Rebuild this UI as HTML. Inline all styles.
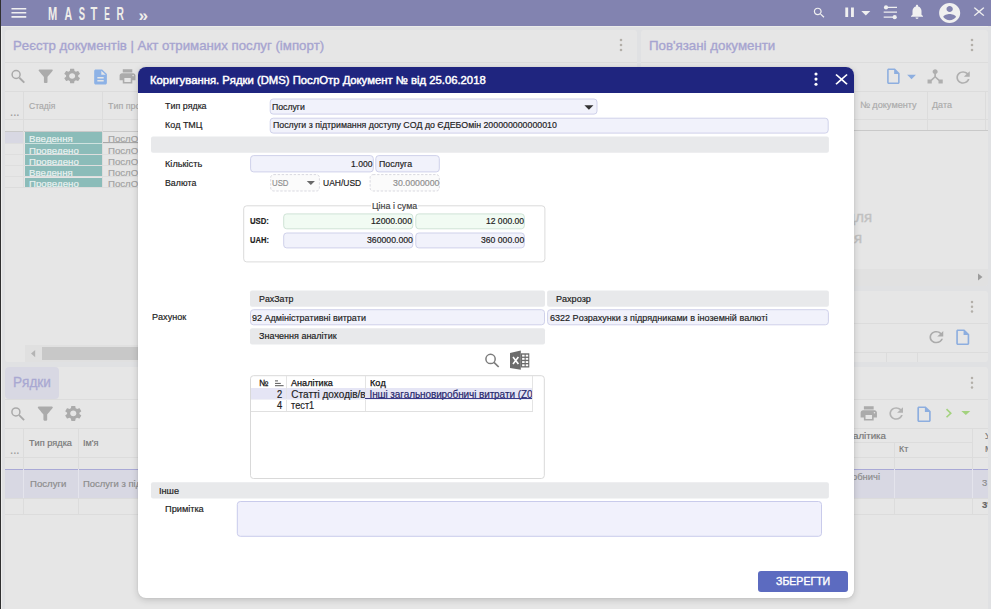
<!DOCTYPE html>
<html lang="uk">
<head>
<meta charset="utf-8">
<title>MASTER</title>
<style>
*{box-sizing:border-box;margin:0;padding:0}
html,body{width:991px;height:609px;overflow:hidden}
body{background:#e0e1e3;font-family:"Liberation Sans",sans-serif;font-size:10px;color:#222;position:relative;font-kerning:none}
.a{position:absolute}
.t{position:absolute;white-space:nowrap;line-height:1;-webkit-text-stroke:.18px currentColor}
svg{position:absolute;display:block;overflow:visible}
#top{left:0;top:0;width:991px;height:26px;background:#8283b0}
#edge{left:0;top:0;width:1px;height:609px;background:#303030}
.panel{position:absolute;background:#e6e6e6;border-radius:3px}
.ln{position:absolute;background:#dcdcdc}
.clip{position:absolute;overflow:hidden}
/* modal */
#modal{left:138px;top:67px;width:715.5px;height:531px;background:#fff;border-radius:8px;box-shadow:0 2px 7px rgba(0,0,0,.17),0 0 2px rgba(0,0,0,.08)}
#mhead{left:138px;top:67px;width:715.5px;height:25.5px;background:#1f257f;border-radius:8px 8px 0 0}
.inp{position:absolute;border:1px solid #cfd1ea;border-radius:3px;background:#f1f1fb;overflow:hidden}
.inp.g{background:#f0fbf1;border-color:#cfe3d6}
.inp.d{border:1px dashed #d4d4d4;background:#fbfbfb}
.bar{position:absolute;background:#e9e9e9;border-radius:2px}
</style>
</head>
<body>
<!-- ===== background app ===== -->
<div class="a" id="top"></div>
<div class="a" style="left:1px;top:26px;width:990px;height:1px;background:#eaebea"></div>
<div class="a" style="left:1px;top:26px;width:1px;height:583px;background:#eeeeee"></div>
<svg style="left:8.53px;top:3.20px" width="19.73" height="19.60" viewBox="0 0 24 24" preserveAspectRatio="none"><path fill="#f0f0f0" d="M3 18h18v-2H3v2zm0-5h18v-2H3v2zm0-7v2h18V6H3z"/></svg>
<svg style="left:0;top:0" width="160" height="26" viewBox="0 0 160 26">
 <g fill="#efeeea" font-family="Liberation Sans, sans-serif" font-weight="bold" font-size="18">
  <text x="48.1" y="19.7" textLength="9.2" lengthAdjust="spacingAndGlyphs">M</text>
  <text x="64.6" y="19.7" textLength="7.6" lengthAdjust="spacingAndGlyphs">A</text>
  <text x="78.8" y="19.7" textLength="6.3" lengthAdjust="spacingAndGlyphs">S</text>
  <text x="90.4" y="19.7" textLength="6.8" lengthAdjust="spacingAndGlyphs">T</text>
  <text x="104.3" y="19.7" textLength="5.6" lengthAdjust="spacingAndGlyphs">E</text>
  <text x="116.6" y="19.7" textLength="7.4" lengthAdjust="spacingAndGlyphs">R</text>
  <text x="138.6" y="20.6" font-size="17" textLength="9.6" lengthAdjust="spacingAndGlyphs">»</text>
 </g>
</svg>
<svg style="left:811.58px;top:6.28px" width="14.55" height="13.72" viewBox="0 0 24 24" preserveAspectRatio="none"><path fill="#f0f0f0" d="M15.5 14h-.79l-.28-.27C15.41 12.59 16 11.11 16 9.5 16 5.91 13.09 3 9.5 3S3 5.91 3 9.5 5.91 16 9.5 16c1.61 0 3.09-.59 4.23-1.57l.27.28v.79l5 4.99L20.49 19l-4.99-5zm-6 0C7.01 14 5 11.99 5 9.5S7.01 5 9.5 5 14 7.01 14 9.5 11.99 14 9.5 14z"/></svg>
<svg style="left:840.60px;top:4.11px" width="17.20" height="16.29" viewBox="0 0 24 24" preserveAspectRatio="none"><path fill="#f0f0f0" d="M6 19h4V5H6v14zm8-14v14h4V5h-4z"/></svg>
<svg style="left:854.70px;top:1.60px" width="21.60" height="21.60" viewBox="0 0 24 24" preserveAspectRatio="none"><path fill="#f0f0f0" d="M7 10l5 5 5-5z"/></svg>
<svg style="left:883px;top:4px" width="16" height="16" viewBox="0 0 16 16"><g stroke="#f0f0f0" stroke-width="1.3" fill="none"><path d="M3 3.4H14M.7 8.2H14M.7 13.2H11.6"/></g><g fill="#f0f0f0"><circle cx="3" cy="3.4" r="2.1"/><circle cx="11.7" cy="13.2" r="2.1"/></g></svg>
<svg style="left:908.00px;top:3.18px" width="18.00" height="17.48" viewBox="0 0 24 24" preserveAspectRatio="none"><path fill="#f0f0f0" d="M12 22c1.1 0 2-.9 2-2h-4c0 1.1.89 2 2 2zm6-6v-5c0-3.07-1.64-5.64-4.5-6.32V4c0-.83-.67-1.5-1.5-1.5s-1.5.67-1.5 1.5v.68C7.63 5.36 6 7.92 6 11v5l-2 2v1h16v-1l-2-2z"/></svg>
<svg style="left:937.09px;top:0.80px" width="25.32" height="24.00" viewBox="0 0 24 24" preserveAspectRatio="none"><path fill="#f0f0f0" d="M12 2C6.48 2 2 6.48 2 12s4.48 10 10 10 10-4.48 10-10S17.52 2 12 2zm0 3c1.66 0 3 1.34 3 3s-1.34 3-3 3-3-1.34-3-3 1.34-3 3-3zm0 14.2c-2.5 0-4.71-1.28-6-3.22.03-1.99 4-3.08 6-3.08 1.99 0 5.97 1.09 6 3.08-1.29 1.94-3.5 3.22-6 3.22z"/></svg>
<svg style="left:970.41px;top:4.22px" width="18.17" height="15.26" viewBox="0 0 24 24" preserveAspectRatio="none"><path fill="#f0f0f0" d="M19 6.41L17.59 5 12 10.59 6.41 5 5 6.41 10.59 12 5 17.59 6.41 19 12 13.41 17.59 19 19 17.59 13.41 12z"/></svg>
<!-- panels -->
<div class="panel" style="left:5px;top:30px;width:632px;height:332px"></div>
<div class="panel" style="left:641px;top:30px;width:347px;height:256.2px"></div>
<div class="panel" style="left:641px;top:290.5px;width:347px;height:71.5px"></div>
<div class="panel" style="left:5px;top:367px;width:982.5px;height:250px"></div>
<!-- left top panel -->
<span class="t" style="top:39.00px;font-size:13px;color:#a6a4d0;left:12.50px;transform:scaleX(1.0171);transform-origin:0 0;-webkit-text-stroke:.35px #a6a4d0;">Реєстр документів | Акт отриманих послуг (імпорт)</span>
<svg style="left:617.9px;top:37.4px" width="6" height="16" viewBox="0 0 6 16"><g fill="#b3afa9"><circle cx="3" cy="3" r="1.3"/><circle cx="3" cy="8" r="1.3"/><circle cx="3" cy="13" r="1.3"/></g></svg>
<div class="ln" style="left:5px;top:62px;width:632px;height:1px"></div>
<svg style="left:10px;top:68px" width="20" height="20" viewBox="10 68 20 20"><circle cx="16.1" cy="74.5" r="4.0" fill="none" stroke="#a9a9a9" stroke-width="1.5"/><path d="M19.32 77.72L24.3 82.7" stroke="#a9a9a9" stroke-width="1.9" fill="none"/></svg>
<svg style="left:34.59px;top:66.20px" width="21.42" height="20.40" viewBox="0 0 24 24" preserveAspectRatio="none"><path fill="#ababab" d="M4.25 5.61C6.27 8.2 10 13 10 13v6c0 .55.45 1 1 1h2c.55 0 1-.45 1-1v-6s3.72-4.8 5.74-7.39A.998.998 0 0 0 18.95 4H5.04c-.83 0-1.3.95-.79 1.61z"/></svg>
<svg style="left:62.15px;top:67.20px" width="20.30" height="18.00" viewBox="0 0 24 24" preserveAspectRatio="none"><path fill="#ababab" d="M19.14 12.94c.04-.3.06-.61.06-.94 0-.32-.02-.64-.07-.94l2.03-1.58c.18-.14.23-.41.12-.61l-1.92-3.32c-.12-.22-.37-.29-.59-.22l-2.39.96c-.5-.38-1.03-.7-1.62-.94l-.36-2.54c-.04-.24-.24-.41-.48-.41h-3.84c-.24 0-.43.17-.47.41l-.36 2.54c-.59.24-1.13.57-1.62.94l-2.39-.96c-.22-.08-.47 0-.59.22L2.74 8.87c-.12.21-.08.47.12.61l2.03 1.58c-.05.3-.09.63-.09.94s.02.64.07.94l-2.03 1.58c-.18.14-.23.41-.12.61l1.92 3.32c.12.22.37.29.59.22l2.39-.96c.5.38 1.03.7 1.62.94l.36 2.54c.05.24.24.41.48.41h3.84c.24 0 .44-.17.47-.41l.36-2.54c.59-.24 1.13-.56 1.62-.94l2.39.96c.22.08.47 0 .59-.22l1.92-3.32c.12-.22.07-.47-.12-.61l-2.01-1.58zM12 15.6c-1.98 0-3.6-1.62-3.6-3.6s1.62-3.6 3.6-3.6 3.6 1.62 3.6 3.6-1.62 3.6-3.6 3.6z"/></svg>
<svg style="left:91.12px;top:67.50px" width="19.05" height="18.00" viewBox="0 0 24 24" preserveAspectRatio="none"><path fill="#8db2e6" d="M14 2H6c-1.1 0-1.99.9-1.99 2L4 20c0 1.1.89 2 1.99 2H18c1.1 0 2-.9 2-2V8l-6-6zm2 16H8v-2h8v2zm0-4H8v-2h8v2zm-3-5V3.5L18.5 9H13z"/></svg>
<svg style="left:118.01px;top:67.15px" width="19.08" height="18.80" viewBox="0 0 24 24" preserveAspectRatio="none"><path fill="#ababab" d="M19 8H5c-1.66 0-3 1.34-3 3v6h4v4h12v-4h4v-6c0-1.66-1.34-3-3-3zm-3 11H8v-5h8v5zm3-7c-.55 0-1-.45-1-1s.45-1 1-1 1 .45 1 1-.45 1-1 1zm-1-9H6v4h12V3z"/></svg>
<!-- left table -->
<div class="ln" style="left:5px;top:91px;width:632px;height:1px"></div>
<div class="ln" style="left:5px;top:119px;width:632px;height:1px"></div>
<div class="ln" style="left:5px;top:131px;width:632px;height:1px;background:#c9c9c9"></div>
<div class="ln" style="left:23px;top:92px;width:1px;height:96px"></div>
<div class="ln" style="left:102px;top:92px;width:1px;height:96px"></div>
<span class="t" style="top:102.00px;font-size:9px;color:#a9a9a9;left:29.30px;transform:scaleX(0.9512);transform-origin:0 0;">Стадія</span>
<span class="t" style="top:102.00px;font-size:9px;color:#a9a9a9;left:108.00px;transform:scaleX(0.9880);transform-origin:0 0;">Тип про</span>
<span class="t" style="top:105.00px;font-size:13px;color:#9a9a9a;left:10.40px;transform:scaleX(0.8675);transform-origin:0 0;">...</span>
<div class="a" style="left:5px;top:132px;width:18px;height:11.5px;background:#d8d8e3"></div>
<div class="a" style="left:25px;top:132px;width:77px;height:11px;background:#8bbcb9"></div>
<div class="clip" style="left:25px;top:131px;width:115px;height:12px"><span class="t" style="left:3.8px;top:4px;font-size:9px;color:#eaf2f1;transform:scaleX(1.07);transform-origin:0 0">Введення</span><span class="t" style="left:82.8px;top:4px;font-size:9px;color:#a2a2a2;transform:scaleX(1.07);transform-origin:0 0">ПослОтр</span></div>
<div class="ln" style="left:5px;top:142.9px;width:632px;height:1px;background:#dedede"></div>
<div class="a" style="left:25px;top:144.1px;width:77px;height:9.7px;background:#8bbcb9"></div>
<div class="clip" style="left:25px;top:144px;width:115px;height:10px"><span class="t" style="left:3.8px;top:3px;font-size:9px;color:#eaf2f1;transform:scaleX(1.07);transform-origin:0 0">Проведено</span><span class="t" style="left:82.8px;top:3px;font-size:9px;color:#a2a2a2;transform:scaleX(1.07);transform-origin:0 0">ПослОтр</span></div>
<div class="ln" style="left:5px;top:154.1px;width:632px;height:1px;background:#dedede"></div>
<div class="a" style="left:25px;top:155.4px;width:77px;height:9.7px;background:#8bbcb9"></div>
<div class="clip" style="left:25px;top:155px;width:115px;height:10px"><span class="t" style="left:3.8px;top:3px;font-size:9px;color:#eaf2f1;transform:scaleX(1.07);transform-origin:0 0">Проведено</span><span class="t" style="left:82.8px;top:3px;font-size:9px;color:#a2a2a2;transform:scaleX(1.07);transform-origin:0 0">ПослОтр</span></div>
<div class="ln" style="left:5px;top:165.1px;width:632px;height:1px;background:#dedede"></div>
<div class="a" style="left:25px;top:166.2px;width:77px;height:9.9px;background:#8bbcb9"></div>
<div class="clip" style="left:25px;top:166px;width:115px;height:10px"><span class="t" style="left:3.8px;top:3px;font-size:9px;color:#eaf2f1;transform:scaleX(1.07);transform-origin:0 0">Введення</span><span class="t" style="left:82.8px;top:3px;font-size:9px;color:#a2a2a2;transform:scaleX(1.07);transform-origin:0 0">ПослОтр</span></div>
<div class="ln" style="left:5px;top:176.3px;width:632px;height:1px;background:#dedede"></div>
<div class="a" style="left:25px;top:177.5px;width:77px;height:9.5px;background:#8bbcb9"></div>
<div class="clip" style="left:25px;top:177px;width:115px;height:10px"><span class="t" style="left:3.8px;top:3px;font-size:9px;color:#eaf2f1;transform:scaleX(1.07);transform-origin:0 0">Проведено</span><span class="t" style="left:82.8px;top:3px;font-size:9px;color:#a2a2a2;transform:scaleX(1.07);transform-origin:0 0">ПослОтр</span></div>
<div class="a" style="left:25px;top:142.9px;width:77px;height:.8px;background:#cfe2df"></div>
<div class="a" style="left:103px;top:142px;width:40px;height:1px;background:#a8a8a8"></div>
<div class="ln" style="left:5px;top:187px;width:632px;height:1px"></div>
<!-- scrollbar -->
<div class="a" style="left:25px;top:345px;width:612px;height:17px;background:#e0e0e0"></div>
<div class="a" style="left:42px;top:347px;width:400px;height:12.7px;background:#c8c8c8"></div>
<svg style="left:30.9px;top:349.9px" width="4.2" height="7.2" viewBox="0 0 5 8" preserveAspectRatio="none"><path d="M5 0L0 4l5 4z" fill="#b4b4b4"/></svg>
<!-- right top panel -->
<span class="t" style="top:39.00px;font-size:13px;color:#a6a4d0;left:649.30px;transform:scaleX(1.0232);transform-origin:0 0;-webkit-text-stroke:.35px #a6a4d0;">Пов'язані документи</span>
<svg style="left:968.9px;top:37.4px" width="6" height="16" viewBox="0 0 6 16"><g fill="#b3afa9"><circle cx="3" cy="3" r="1.3"/><circle cx="3" cy="8" r="1.3"/><circle cx="3" cy="13" r="1.3"/></g></svg>
<div class="ln" style="left:641px;top:62px;width:346.5px;height:1px"></div>
<svg style="left:884.17px;top:67.16px" width="18.75" height="18.48" viewBox="0 0 24 24" preserveAspectRatio="none"><path fill="#8daedf" d="M14 2H6c-1.1 0-1.99.9-1.99 2L4 20c0 1.1.89 2 1.99 2H18c1.1 0 2-.9 2-2V8l-6-6zM6 20V4h7v5h5v11H6z"/></svg>
<svg style="left:900.84px;top:65.60px" width="21.12" height="21.12" viewBox="0 0 24 24" preserveAspectRatio="none"><path fill="#8daedf" d="M7 10l5 5 5-5z"/></svg>
<svg style="left:925.47px;top:67.35px" width="20.27" height="18.80" viewBox="0 0 24 24" preserveAspectRatio="none"><path fill="#afafaf" d="M17 16l-4-4V8.82C14.16 8.4 15 7.3 15 6c0-1.66-1.34-3-3-3S9 4.34 9 6c0 1.3.84 2.4 2 2.82V12l-4 4H3v5h5v-3.05l4-4.2 4 4.2V21h5v-5h-4z"/></svg>
<svg style="left:952.64px;top:67.55px" width="20.11" height="18.90" viewBox="0 0 24 24" preserveAspectRatio="none"><path fill="#afafaf" d="M17.65 6.35C16.2 4.9 14.21 4 12 4c-4.42 0-7.99 3.58-7.99 8s3.57 8 7.99 8c3.73 0 6.84-2.55 7.73-6h-2.08c-.82 2.33-3.04 4-5.65 4-3.31 0-6-2.69-6-6s2.69-6 6-6c1.66 0 3.14.69 4.22 1.78L13 11h7V4l-2.35 2.35z"/></svg>
<div class="ln" style="left:641px;top:91px;width:346.5px;height:1px"></div>
<div class="ln" style="left:641px;top:119px;width:346.5px;height:1px"></div>
<div class="ln" style="left:641px;top:130px;width:346.5px;height:1px;background:#c9c9c9"></div>
<div class="ln" style="left:926.5px;top:92px;width:1px;height:38px"></div>
<div class="ln" style="left:985px;top:92px;width:1px;height:38px"></div>
<span class="t" style="top:101.00px;font-size:9px;color:#ababab;left:860.30px;transform:scaleX(1.0173);transform-origin:0 0;">№ документу</span>
<span class="t" style="top:101.00px;font-size:9px;color:#ababab;left:931.60px;transform:scaleX(0.9935);transform-origin:0 0;">Дата</span>
<span class="t" style="right:118.80px;top:209.00px;font-size:15px;color:#c1c1c1;transform:scaleX(1);transform-origin:100% 0;-webkit-text-stroke:.35px #c1c1c1;">для</span>
<span class="t" style="right:128.80px;top:230.00px;font-size:15px;color:#c1c1c1;transform:scaleX(1);transform-origin:100% 0;-webkit-text-stroke:.35px #c1c1c1;">я</span>
<div class="a" style="left:641px;top:269px;width:347px;height:17.2px;background:#e1e1e1;border-radius:0 0 3px 3px"></div>
<svg style="left:977.5px;top:273px" width="4.5" height="8" viewBox="0 0 5 8"><path d="M0 0l5 4-5 4z" fill="#9c9c9c"/></svg>
<!-- right mid panel -->
<svg style="left:969px;top:298.8px" width="6" height="15.6" viewBox="0 0 6 15.6"><g fill="#b3afa9"><circle cx="3" cy="3" r="1.25"/><circle cx="3" cy="7.8" r="1.25"/><circle cx="3" cy="12.6" r="1.25"/></g></svg>
<div class="ln" style="left:641px;top:322.5px;width:346.5px;height:1px"></div>
<svg style="left:925.54px;top:328.43px" width="20.71" height="18.45" viewBox="0 0 24 24" preserveAspectRatio="none"><path fill="#ababab" d="M17.65 6.35C16.2 4.9 14.21 4 12 4c-4.42 0-7.99 3.58-7.99 8s3.57 8 7.99 8c3.73 0 6.84-2.55 7.73-6h-2.08c-.82 2.33-3.04 4-5.65 4-3.31 0-6-2.69-6-6s2.69-6 6-6c1.66 0 3.14.69 4.22 1.78L13 11h7V4l-2.35 2.35z"/></svg>
<svg style="left:952.75px;top:328.26px" width="19.50" height="18.48" viewBox="0 0 24 24" preserveAspectRatio="none"><path fill="#8daedf" d="M14 2H6c-1.1 0-1.99.9-1.99 2L4 20c0 1.1.89 2 1.99 2H18c1.1 0 2-.9 2-2V8l-6-6zM6 20V4h7v5h5v11H6z"/></svg>
<div class="ln" style="left:641px;top:351.5px;width:346.5px;height:1px"></div>
<div class="ln" style="left:885.5px;top:352px;width:1px;height:10px"></div>
<div class="ln" style="left:917px;top:352px;width:1px;height:10px"></div>
<!-- bottom panel -->
<div class="a" style="left:5px;top:367px;width:53.7px;height:31.5px;background:#d8d8e3;border-radius:4px"></div>
<span class="t" style="top:375.00px;font-size:14px;color:#a9a8d2;left:13.40px;transform:scaleX(0.9697);transform-origin:0 0;-webkit-text-stroke:.3px #a9a8d2;">Рядки</span>
<svg style="left:969px;top:374.8px" width="6" height="15.6" viewBox="0 0 6 15.6"><g fill="#b3afa9"><circle cx="3" cy="3" r="1.25"/><circle cx="3" cy="7.8" r="1.25"/><circle cx="3" cy="12.6" r="1.25"/></g></svg>
<div class="ln" style="left:5px;top:399px;width:982.5px;height:1px"></div>
<svg style="left:9px;top:405px" width="20" height="20" viewBox="9 405 20 20"><circle cx="15.9" cy="411.9" r="4.0" fill="none" stroke="#a9a9a9" stroke-width="1.5"/><path d="M19.12 415.12L24.1 420.1" stroke="#a9a9a9" stroke-width="1.9" fill="none"/></svg>
<svg style="left:34.19px;top:402.65px" width="22.63" height="21.30" viewBox="0 0 24 24" preserveAspectRatio="none"><path fill="#ababab" d="M4.25 5.61C6.27 8.2 10 13 10 13v6c0 .55.45 1 1 1h2c.55 0 1-.45 1-1v-6s3.72-4.8 5.74-7.39A.998.998 0 0 0 18.95 4H5.04c-.83 0-1.3.95-.79 1.61z"/></svg>
<svg style="left:62.72px;top:404.12px" width="20.56" height="18.75" viewBox="0 0 24 24" preserveAspectRatio="none"><path fill="#ababab" d="M19.14 12.94c.04-.3.06-.61.06-.94 0-.32-.02-.64-.07-.94l2.03-1.58c.18-.14.23-.41.12-.61l-1.92-3.32c-.12-.22-.37-.29-.59-.22l-2.39.96c-.5-.38-1.03-.7-1.62-.94l-.36-2.54c-.04-.24-.24-.41-.48-.41h-3.84c-.24 0-.43.17-.47.41l-.36 2.54c-.59.24-1.13.57-1.62.94l-2.39-.96c-.22-.08-.47 0-.59.22L2.74 8.87c-.12.21-.08.47.12.61l2.03 1.58c-.05.3-.09.63-.09.94s.02.64.07.94l-2.03 1.58c-.18.14-.23.41-.12.61l1.92 3.32c.12.22.37.29.59.22l2.39-.96c.5.38 1.03.7 1.62.94l.36 2.54c.05.24.24.41.48.41h3.84c.24 0 .44-.17.47-.41l.36-2.54c.59-.24 1.13-.56 1.62-.94l2.39.96c.22.08.47 0 .59-.22l1.92-3.32c.12-.22.07-.47-.12-.61l-2.01-1.58zM12 15.6c-1.98 0-3.6-1.62-3.6-3.6s1.62-3.6 3.6-3.6 3.6 1.62 3.6 3.6-1.62 3.6-3.6 3.6z"/></svg>
<svg style="left:858.87px;top:403.83px" width="19.56" height="18.93" viewBox="0 0 24 24" preserveAspectRatio="none"><path fill="#ababab" d="M19 8H5c-1.66 0-3 1.34-3 3v6h4v4h12v-4h4v-6c0-1.66-1.34-3-3-3zm-3 11H8v-5h8v5zm3-7c-.55 0-1-.45-1-1s.45-1 1-1 1 .45 1 1-.45 1-1 1zm-1-9H6v4h12V3z"/></svg>
<svg style="left:885.59px;top:404.32px" width="20.41" height="19.05" viewBox="0 0 24 24" preserveAspectRatio="none"><path fill="#b3b3b3" d="M17.65 6.35C16.2 4.9 14.21 4 12 4c-4.42 0-7.99 3.58-7.99 8s3.57 8 7.99 8c3.73 0 6.84-2.55 7.73-6h-2.08c-.82 2.33-3.04 4-5.65 4-3.31 0-6-2.69-6-6s2.69-6 6-6c1.66 0 3.14.69 4.22 1.78L13 11h7V4l-2.35 2.35z"/></svg>
<svg style="left:913.65px;top:404.66px" width="20.10" height="18.48" viewBox="0 0 24 24" preserveAspectRatio="none"><path fill="#8daedf" d="M14 2H6c-1.1 0-1.99.9-1.99 2L4 20c0 1.1.89 2 1.99 2H18c1.1 0 2-.9 2-2V8l-6-6zM6 20V4h7v5h5v11H6z"/></svg>
<svg style="left:938.74px;top:404.40px" width="19.43" height="18.40" viewBox="0 0 24 24" preserveAspectRatio="none"><path fill="#a3d27e" d="M10 6L8.59 7.41 13.17 12l-4.58 4.59L10 18l6-6z"/></svg>
<svg style="left:954.70px;top:403.40px" width="21.60" height="19.20" viewBox="0 0 24 24" preserveAspectRatio="none"><path fill="#a3d27e" d="M7 10l5 5 5-5z"/></svg>
<div class="a" style="left:5px;top:469.4px;width:982.5px;height:28.8px;background:#d8d8e3"></div>
<div class="ln" style="left:5px;top:428px;width:982.5px;height:1px"></div>
<div class="ln" style="left:5px;top:457px;width:982.5px;height:1px"></div>
<div class="ln" style="left:5px;top:468.6px;width:982.5px;height:1px;background:#a9a9d6"></div>
<div class="ln" style="left:5px;top:498px;width:982.5px;height:1px"></div>
<div class="ln" style="left:5px;top:513.5px;width:982.5px;height:1px"></div>
<div class="ln" style="left:23px;top:429px;width:1px;height:85px"></div>
<div class="ln" style="left:78px;top:429px;width:1px;height:85px"></div>
<div class="ln" style="left:894.4px;top:442.5px;width:1px;height:71px"></div>
<div class="ln" style="left:972.3px;top:429px;width:1px;height:85px"></div>
<div class="ln" style="left:840px;top:442.3px;width:132px;height:1px"></div>
<div class="a" style="left:23px;top:469.4px;width:1px;height:28.6px;background:#e4e4ec"></div>
<div class="a" style="left:78px;top:469.4px;width:1px;height:28.6px;background:#e4e4ec"></div>
<div class="a" style="left:894.4px;top:469.4px;width:1px;height:28.6px;background:#e4e4ec"></div>
<div class="a" style="left:972.3px;top:469.4px;width:1px;height:28.6px;background:#e4e4ec"></div>
<span class="t" style="top:439.00px;font-size:9px;color:#777;left:29.30px;transform:scaleX(1.0198);transform-origin:0 0;">Тип рядка</span>
<span class="t" style="top:439.00px;font-size:9px;color:#777;left:83.00px;transform:scaleX(1.0144);transform-origin:0 0;">Ім'я</span>
<span class="t" style="top:443.00px;font-size:13px;color:#9a9a9a;left:10.00px;transform:scaleX(0.8768);transform-origin:0 0;">...</span>
<span class="t" style="top:480.00px;font-size:9px;color:#8c8c8c;left:29.50px;transform:scaleX(1.0665);transform-origin:0 0;">Послуги</span>
<span class="t" style="top:480.00px;font-size:9px;color:#8c8c8c;left:83.30px;transform:scaleX(1.0527);transform-origin:0 0;">Послуги з під</span>
<span class="t" style="top:432.00px;font-size:9px;color:#777;left:853.00px;transform:scaleX(1.0803);transform-origin:0 0;">алітика</span>
<span class="t" style="top:445.00px;font-size:9px;color:#777;left:898.80px;transform:scaleX(0.9824);transform-origin:0 0;">Кт</span>
<span class="t" style="top:432.00px;font-size:9px;color:#777;left:985.00px;">У</span>
<span class="t" style="top:445.00px;font-size:9px;color:#777;left:985.00px;">М</span>
<span class="t" style="top:473.00px;font-size:9px;color:#8c8c8c;left:852.00px;transform:scaleX(1.0430);transform-origin:0 0;">обничі</span>
<span class="t" style="top:478.00px;font-size:9.5px;color:#8c8c8c;left:982.00px;">3</span>
<span class="t" style="top:500.00px;font-size:9.5px;color:#666;font-weight:bold;left:982.00px;">3'</span>
<div class="a" style="left:987.5px;top:26px;width:4px;height:583px;background:#e0e1e3"></div>
<!-- ===== modal ===== -->
<div class="a" id="modal"></div>
<div class="a" id="mhead"></div>
<svg style="left:0;top:0" width="991" height="609" viewBox="0 0 991 609"><rect x="270.20" y="99.00" width="326.80" height="15.10" rx="3" fill="#f1f2fb" stroke="#cfd1ea" stroke-width="1"/><rect x="270.20" y="118.20" width="558.00" height="14.90" rx="3" fill="#f1f2fb" stroke="#cfd1ea" stroke-width="1"/><rect x="151.00" y="136.50" width="677.90" height="16.30" rx="2" fill="#e8e9eb"/><rect x="250.60" y="155.60" width="122.70" height="16.30" rx="3" fill="#f1f2fb" stroke="#cfd1ea" stroke-width="1"/><rect x="375.80" y="155.60" width="63.50" height="16.30" rx="3" fill="#f1f2fb" stroke="#cfd1ea" stroke-width="1"/><rect x="270.70" y="174.60" width="48.70" height="16.40" rx="3" fill="#fbfbfb" stroke="#d9d9e0" stroke-width="1" stroke-dasharray="2.4 1.6"/><rect x="370.10" y="174.60" width="69.20" height="16.40" rx="3" fill="#fbfbfb" stroke="#d9d9e0" stroke-width="1" stroke-dasharray="2.4 1.6"/><rect x="243.70" y="205.80" width="301.20" height="56.10" rx="3" fill="#fff" stroke="#dbdbdb" stroke-width="1"/><rect x="283.70" y="213.90" width="129.10" height="14.90" rx="3" fill="#f1fbf3" stroke="#cfe3d6" stroke-width="1"/><rect x="415.80" y="213.90" width="108.50" height="14.90" rx="3" fill="#f1fbf3" stroke="#cfe3d6" stroke-width="1"/><rect x="283.70" y="233.00" width="129.10" height="14.90" rx="3" fill="#f1f2fb" stroke="#cfd1ea" stroke-width="1"/><rect x="415.80" y="233.00" width="108.50" height="14.90" rx="3" fill="#f1f2fb" stroke="#cfd1ea" stroke-width="1"/><rect x="250.00" y="290.50" width="295.00" height="16.30" rx="2" fill="#e8e9eb"/><rect x="547.10" y="290.50" width="281.80" height="16.30" rx="2" fill="#e8e9eb"/><rect x="250.50" y="309.70" width="294.00" height="15.10" rx="3" fill="#f1f2fb" stroke="#cfd1ea" stroke-width="1"/><rect x="547.60" y="309.70" width="280.80" height="15.10" rx="3" fill="#f1f2fb" stroke="#cfd1ea" stroke-width="1"/><rect x="250.00" y="328.30" width="295.00" height="16.10" rx="2" fill="#e8e9eb"/><rect x="250.50" y="375.70" width="293.80" height="102.80" rx="3" fill="#fff" stroke="#d9d9d9" stroke-width="1"/><rect x="151.00" y="482.20" width="677.90" height="16.40" rx="2" fill="#e8e9eb"/><rect x="237.30" y="501.50" width="584.20" height="34.80" rx="3" fill="#f1f1fc" stroke="#c9cbeb" stroke-width="1"/><rect x="758.00" y="571.00" width="90.00" height="21.10" rx="3" fill="#5c6bc0"/></svg>
<span class="t" style="top:75.00px;font-size:11px;color:#fff;left:150.00px;transform:scaleX(1.0261);transform-origin:0 0;-webkit-text-stroke:.45px #fff;">Коригування. Рядки (DMS) ПослОтр Документ № від 25.06.2018</span>
<svg style="left:812.9px;top:71.45px" width="6" height="16.2" viewBox="0 0 6 16.2"><g fill="#fff"><circle cx="3" cy="3" r="1.55"/><circle cx="3" cy="8.1" r="1.55"/><circle cx="3" cy="13.2" r="1.55"/></g></svg>
<svg style="left:830.81px;top:70.11px" width="21.09" height="18.69" viewBox="0 0 24 24" preserveAspectRatio="none"><path fill="#fff" d="M19 6.41L17.59 5 12 10.59 6.41 5 5 6.41 10.59 12 5 17.59 6.41 19 12 13.41 17.59 19 19 17.59 13.41 12z"/></svg>
<!-- row 1,2 -->
<span class="t" style="top:102.00px;font-size:9px;color:#222;left:164.80px;transform:scaleX(0.9886);transform-origin:0 0;">Тип рядка</span>
<span class="t" style="top:103.00px;font-size:9px;color:#222;left:272.10px;transform:scaleX(0.9666);transform-origin:0 0;">Послуги</span>
<svg style="left:577.53px;top:95.70px" width="21.84" height="22.08" viewBox="0 0 24 24" preserveAspectRatio="none"><path fill="#333" d="M7 10l5 5 5-5z"/></svg>
<span class="t" style="top:121.00px;font-size:9px;color:#222;left:164.80px;transform:scaleX(0.9932);transform-origin:0 0;">Код ТМЦ</span>
<span class="t" style="top:121.00px;font-size:9px;color:#222;left:272.50px;transform:scaleX(0.9780);transform-origin:0 0;">Послуги з підтримання доступу СОД до ЄДЕБОмін 200000000000010</span>
<!-- qty -->
<span class="t" style="top:160.00px;font-size:9px;color:#222;left:164.80px;transform:scaleX(1.0211);transform-origin:0 0;">Кількість</span>
<span class="t" style="top:160.00px;font-size:9px;color:#222;left:351.30px;transform:scaleX(0.9502);transform-origin:0 0;">1.000</span>
<span class="t" style="top:160.00px;font-size:9px;color:#222;left:378.80px;transform:scaleX(0.9729);transform-origin:0 0;">Послуга</span>
<!-- currency -->
<span class="t" style="top:179.00px;font-size:9px;color:#222;left:164.80px;transform:scaleX(0.9768);transform-origin:0 0;">Валюта</span>
<span class="t" style="top:179.00px;font-size:9px;color:#8f8f8f;left:271.80px;transform:scaleX(0.8683);transform-origin:0 0;">USD</span>
<svg style="left:301.16px;top:173.00px" width="19.68" height="19.20" viewBox="0 0 24 24" preserveAspectRatio="none"><path fill="#6a6a6a" d="M7 10l5 5 5-5z"/></svg>
<span class="t" style="top:179.00px;font-size:9px;color:#222;left:322.80px;transform:scaleX(0.9431);transform-origin:0 0;">UAH/USD</span>
<span class="t" style="top:179.00px;font-size:9px;color:#8f8f8f;left:392.50px;transform:scaleX(0.9779);transform-origin:0 0;">30.0000000</span>
<!-- price fieldset -->
<div class="a" style="left:370.8px;top:203px;width:47.6px;height:6px;background:#fff"></div>
<span class="t" style="top:202.00px;font-size:9px;color:#444;left:372.00px;transform:scaleX(0.9885);transform-origin:0 0;">Ціна і сума</span>
<span class="t" style="top:217.00px;font-size:9px;color:#222;font-weight:bold;left:250.30px;transform:scaleX(0.8592);transform-origin:0 0;">USD:</span>
<span class="t" style="top:217.00px;font-size:9px;color:#222;left:371.40px;transform:scaleX(0.9637);transform-origin:0 0;">12000.000</span>
<span class="t" style="top:217.00px;font-size:9px;color:#222;left:486.00px;transform:scaleX(0.9491);transform-origin:0 0;">12 000.00</span>
<span class="t" style="top:236.00px;font-size:9px;color:#222;font-weight:bold;left:250.30px;transform:scaleX(0.8402);transform-origin:0 0;">UAH:</span>
<span class="t" style="top:236.00px;font-size:9px;color:#222;left:366.50px;transform:scaleX(0.9653);transform-origin:0 0;">360000.000</span>
<span class="t" style="top:236.00px;font-size:9px;color:#222;left:480.80px;transform:scaleX(0.9590);transform-origin:0 0;">360 000.00</span>
<!-- accounts -->
<span class="t" style="top:295.00px;font-size:9px;color:#222;left:258.80px;transform:scaleX(0.9803);transform-origin:0 0;">РахЗатр</span>
<span class="t" style="top:295.00px;font-size:9px;color:#222;left:555.50px;transform:scaleX(1.0072);transform-origin:0 0;">Рахрозр</span>
<span class="t" style="top:313.00px;font-size:9px;color:#222;left:151.60px;transform:scaleX(1.0082);transform-origin:0 0;">Рахунок</span>
<span class="t" style="top:314.00px;font-size:9px;color:#222;left:252.40px;transform:scaleX(0.9995);transform-origin:0 0;">92 Адміністративні витрати</span>
<span class="t" style="top:314.00px;font-size:9px;color:#222;left:549.70px;transform:scaleX(1.0036);transform-origin:0 0;">6322 Розрахунки з підрядниками в іноземній валюті</span>
<span class="t" style="top:332.00px;font-size:9px;color:#222;left:258.80px;transform:scaleX(0.9995);transform-origin:0 0;">Значення аналітик</span>
<svg style="left:484px;top:352px" width="17" height="17" viewBox="0 0 17 17"><circle cx="6.55" cy="6.95" r="4.65" fill="none" stroke="#7c7c7c" stroke-width="1.5"/><path d="M10 10.4l4.7 4.6" stroke="#7c7c7c" stroke-width="1.7" fill="none"/></svg>
<!-- excel icon -->
<svg style="left:510px;top:350px" width="20" height="20" viewBox="0 0 20 20"><path d="M0 2.9L10.8 .6V19.7L0 17.9z" fill="#6c6c6c"/><rect x="10.8" y="3.3" width="8.5" height="14.2" fill="#6c6c6c"/><g fill="#fff"><rect x="12.1" y="4.7" width="2.5" height="1.9"/><rect x="15.7" y="4.7" width="2.5" height="1.9"/><rect x="12.1" y="7.9" width="2.5" height="1.9"/><rect x="15.7" y="7.9" width="2.5" height="1.9"/><rect x="12.1" y="11.1" width="2.5" height="1.9"/><rect x="15.7" y="11.1" width="2.5" height="1.9"/><rect x="12.1" y="14.3" width="2.5" height="1.9"/><rect x="15.7" y="14.3" width="2.5" height="1.9"/></g><path d="M3 6.9l5.4 7.2M8.4 6.9L3 14.1" stroke="#fff" stroke-width="1.6" fill="none"/></svg>
<!-- grid -->
<div class="a" style="left:251px;top:388px;width:281px;height:11px;background:#e5e5f5"></div>
<div class="ln" style="left:286.3px;top:376.3px;width:1px;height:35px;background:#e4e4e4"></div>
<div class="ln" style="left:364.8px;top:376.3px;width:1px;height:35px;background:#e4e4e4"></div>
<div class="ln" style="left:532px;top:376.3px;width:1px;height:35px;background:#e4e4e4"></div>
<div class="ln" style="left:251px;top:411px;width:281.5px;height:1px;background:#e0e0e0"></div>
<div class="ln" style="left:251px;top:399px;width:281.5px;height:1px;background:#f0f0f6"></div>
<span class="t" style="top:379.00px;font-size:9px;color:#111;left:259.40px;transform:scaleX(0.9425);transform-origin:0 0;-webkit-text-stroke:.25px #111;">№</span>
<svg style="left:274.7px;top:380px" width="9" height="7" viewBox="0 0 9 7"><path d="M0 .9h3M0 3.4h5.8M0 5.7h8.6" stroke="#444" stroke-width=".9" fill="none"/></svg>
<span class="t" style="top:379.00px;font-size:9px;color:#111;left:291.30px;transform:scaleX(1.0092);transform-origin:0 0;-webkit-text-stroke:.25px #111;">Аналітика</span>
<span class="t" style="top:379.00px;font-size:9px;color:#111;left:369.50px;transform:scaleX(1.0129);transform-origin:0 0;-webkit-text-stroke:.25px #111;">Код</span>
<span class="t" style="top:390.00px;font-size:10px;color:#222;left:276.80px;transform:scaleX(0.9350);transform-origin:0 0;">2</span>
<div class="clip" style="left:287px;top:388px;width:77.8px;height:12px"><span class="t" style="left:4.30px;top:2.00px;font-size:10px;color:#222;transform:scaleX(1.0);transform-origin:0 0;letter-spacing:-.05px;">Статті доходів/в</span></div>
<div class="clip" style="left:365.4px;top:388px;width:166.6px;height:12px"><span class="t" style="left:4.10px;top:2.00px;font-size:10px;color:#25256c;transform:scaleX(1.0);transform-origin:0 0;letter-spacing:-.105px;">Інші загальновиробничі витрати (Z00</span><div class="a" style="left:0;top:10.3px;width:167px;height:1px;background:#3a3a8a"></div></div>
<span class="t" style="top:401.00px;font-size:10px;color:#222;left:276.80px;transform:scaleX(0.9350);transform-origin:0 0;">4</span>
<span class="t" style="top:401.00px;font-size:10px;color:#222;left:291.30px;transform:scaleX(0.9177);transform-origin:0 0;">тест1</span>
<!-- other -->
<span class="t" style="top:487.00px;font-size:9px;color:#222;left:159.00px;transform:scaleX(1.0154);transform-origin:0 0;">Інше</span>
<span class="t" style="top:505.00px;font-size:9px;color:#222;left:164.50px;transform:scaleX(1.0250);transform-origin:0 0;">Примітка</span>
<span class="t" style="top:576.00px;font-size:11px;color:#fff;left:775.80px;transform:scaleX(0.9601);transform-origin:0 0;-webkit-text-stroke:.4px #fff;">ЗБЕРЕГТИ</span>
<div class="a" id="edge"></div>
</body>
</html>
